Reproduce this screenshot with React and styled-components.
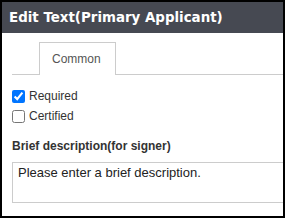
import React from 'react'
import styled, { createGlobalStyle } from 'styled-components'

const GlobalStyle = createGlobalStyle`
  html, body {
    margin: 0;
    padding: 0;
    background: #fff;
  }
  * {
    box-sizing: border-box;
  }
`

const Dialog = styled.div`
  width: 285px;
  height: 218px;
  border: 2px solid #000;
  background: #fff;
  overflow: hidden;
  font-family: "Liberation Sans", Arial, sans-serif;
`

const Header = styled.div`
  height: 31px;
  background: #464952;
  color: #fff;
  display: flex;
  align-items: center;
  padding-left: 7px;
  font-family: "DejaVu Sans", Verdana, sans-serif;
  font-weight: bold;
  font-size: 13.4px;
  white-space: nowrap;
`

const Body = styled.div`
  padding: 9px 0 0 10px;
`

const TabBar = styled.div`
  display: flex;
  padding-left: 27px;
  border-bottom: 1px solid #ccc;
  height: 33px;
`

const Tab = styled.div`
  height: 33px;
  padding: 0 14px 0 12px;
  display: flex;
  align-items: center;
  border: 1px solid #ccc;
  border-bottom: none;
  background: #fff;
  color: #555;
  font-size: 12px;
`

const Options = styled.div`
  margin-top: 11px;
  display: flex;
  flex-direction: column;
`

const CheckRow = styled.label`
  display: flex;
  align-items: center;
  height: 20px;
  font-size: 12px;
  color: #333;
`

const Check = styled.input`
  width: 13px;
  height: 13px;
  margin: 0 4px 0 0;
  accent-color: #0075ff;
`

const FieldLabel = styled.div`
  margin-top: 10px;
  height: 20px;
  line-height: 20px;
  font-size: 12px;
  font-weight: bold;
  color: #333;
`

const TextArea = styled.textarea`
  display: block;
  margin-top: 6px;
  width: 300px;
  height: 41px;
  border: 1px solid #ccc;
  padding: 2px 5px;
  font-family: "Liberation Sans", Arial, sans-serif;
  font-size: 13px;
  line-height: 15px;
  color: #222;
  resize: none;
  outline: none;
`

export default function App() {
  return (
    <>
      <GlobalStyle />
      <Dialog>
        <Header>Edit Text(Primary Applicant)</Header>
        <Body>
          <TabBar>
            <Tab>Common</Tab>
          </TabBar>
          <Options>
            <CheckRow>
              <Check type="checkbox" defaultChecked />
              Required
            </CheckRow>
            <CheckRow>
              <Check type="checkbox" />
              Certified
            </CheckRow>
          </Options>
          <FieldLabel>Brief description(for signer)</FieldLabel>
          <TextArea defaultValue="Please enter a brief description." />
        </Body>
      </Dialog>
    </>
  )
}
